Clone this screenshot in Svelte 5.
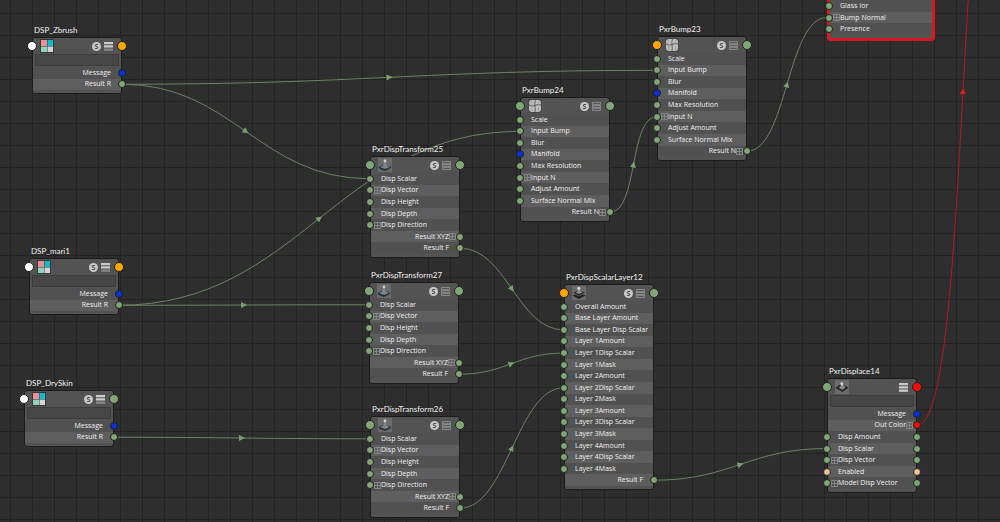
<script>
const disp = ['Disp Scalar', '+Disp Vector', 'Disp Height', 'Disp Depth', '+Disp Direction', '>Result XYZ+', '>Result F'];
const bump = ['Scale', 'Input Bump', 'Blur', 'Manifold*', 'Max Resolution', '+Input N', 'Adjust Amount', 'Surface Normal Mix', '>Result N+'];
const texture = ['>Message*', '>Result R'];
const layer = ['Overall Amount', 'Base Layer Amount', 'Base Layer Disp Scalar',
    'Layer 1Amount', 'Layer 1Disp Scalar', 'Layer 1Mask',
    'Layer 2Amount', 'Layer 2Disp Scalar', 'Layer 2Mask',
    'Layer 3Amount', 'Layer 3Disp Scalar', 'Layer 3Mask',
    'Layer 4Amount', 'Layer 4Disp Scalar', 'Layer 4Mask', '>Result F'];

// leading > = output on the right, + = compound attribute, trailing * = blue port
function plugs(rows) {
    return rows.map((text) => ({
        label: text.replace(/[>+*]/g, ''),
        out: text.startsWith('>'),
        plus: text.includes('+'),
        left: text.startsWith('>') ? '' : text.endsWith('*') ? 'blue' : 'green',
        right: !text.startsWith('>') ? '' : text.endsWith('*') ? 'blue' : 'green',
    }));
}

const displace = plugs(['>Message*', '>Out Color+', 'Disp Amount', 'Disp Scalar', '+Disp Vector', 'Enabled', '+Model Disp Vector']);
displace[1].right = 'red';
for (const p of displace.slice(2)) {
    p.left = p.right = p.label == 'Enabled' ? 'peach' : 'green';
}

const nodes = [
    { id: 'zbrush', title: 'DSP_Zbrush', x: 32, y: 37, icon: 'texture', left: 'white', right: 'orange', list: 'half', search: true, rows: plugs(texture) },
    { id: 'mari', title: 'DSP_mari1', x: 29, y: 258, icon: 'texture', left: 'white', right: 'orange', list: 'half', search: true, rows: plugs(texture) },
    { id: 'dry', title: 'DSP_DrySkin', x: 24, y: 390, icon: 'texture', left: 'white', right: 'green', list: 'half', search: true, rows: plugs(texture) },
    { id: 't25', title: 'PxrDispTransform25', x: 370, y: 156, icon: 'disp', left: 'green', right: 'green', list: 'outline', rows: plugs(disp) },
    { id: 't27', title: 'PxrDispTransform27', x: 369, y: 282, icon: 'disp', left: 'green', right: 'green', list: 'outline', rows: plugs(disp) },
    { id: 't26', title: 'PxrDispTransform26', x: 370, y: 416, icon: 'disp', left: 'green', right: 'green', list: 'outline', rows: plugs(disp) },
    { id: 'b24', title: 'PxrBump24', x: 520, y: 97, icon: 'bump', left: 'green', right: 'green', list: 'outline', rows: plugs(bump) },
    { id: 'b23', title: 'PxrBump23', x: 657, y: 36, icon: 'bump', left: 'orange', right: 'green', list: 'outline', rows: plugs(bump) },
    { id: 'layer', title: 'PxrDispScalarLayer12', x: 564, y: 284, icon: 'layers', left: 'orange', right: 'green', list: 'outline', rows: plugs(layer) },
    { id: 'displace', title: 'PxrDisplace14', x: 827, y: 378, icon: 'plane', left: 'green', right: 'red', list: 'full', search: true, rows: displace },
    { id: 'surface', x: 827, y: -17, wide: true, rows: plugs(['Glass Ior', '+Bump Normal', 'Presence']) },
];

const wires = [
    { from: ['zbrush', 1], to: ['b23', 1] },
    { from: ['zbrush', 1], to: ['t25', 0] },
    { from: ['mari', 1], to: ['b24', 1] },
    { from: ['mari', 1], to: ['t27', 0] },
    { from: ['dry', 1], to: ['t26', 0] },
    { from: ['t25', 6], to: ['layer', 2] },
    { from: ['t27', 6], to: ['layer', 4] },
    { from: ['t26', 6], to: ['layer', 7] },
    { from: ['b24', 8], to: ['b23', 5], bend: 0.6 },
    { from: ['b23', 8], to: ['surface', 1], bend: 0.5 },
    { from: ['layer', 15], to: ['displace', 3] },
    // goes on to a shading group above the visible area
    { from: ['displace', 1], end: [1009, -243], bend: 0.6, red: true },
];

const listHeight = (node) => Math.round(node.rows.length * 185 / 16);

function port([id, row], side) {
    const node = nodes.find((n) => n.id == id);
    const top = node.y + 17 + (node.search ? 13 : 0);
    return [node.x + (side == 'right' ? 90 : 0), top + (row + 0.5) * listHeight(node) / node.rows.length];
}

const curves = wires.map((w) => {
    const [x1, y1] = port(w.from, 'right');
    const [x2, y2] = w.end ?? port(w.to, 'left');
    const d = (x2 - x1) * (w.bend ?? 0.45);
    const angle = Math.atan2(2 * (y2 - y1), 2 * (x2 - x1) - 2 * d) * 180 / Math.PI;
    return {
        d: `M${x1} ${y1} C${x1 + d} ${y1} ${x2 - d} ${y2} ${x2} ${y2}`,
        arrow: `translate(${(x1 + x2) / 2} ${(y1 + y2) / 2}) rotate(${angle})`,
        red: w.red,
    };
});
</script>

<main class="canvas">
    <svg class="wires" aria-hidden="true">
        {#each curves as c}
            <g class:red={c.red}>
                <path class="wire" d={c.d} />
                <path class="arrow" d="M-3 -3 L3 0 L-3 3 Z" transform={c.arrow} />
            </g>
        {/each}
    </svg>

    {#each nodes as node}
        <article class="node" class:wide={node.wide} style="left: {node.x}px; top: {node.y - 13}px">
            <h2>{node.title ?? ''}</h2>
            <div class="body">
                <header>
                    {#if node.icon}
                        <span class="port big left {node.left}"></span>
                        <svg class="icon" viewBox="0 0 14 14">
                            {#if node.icon == 'texture'}
                                <rect width="14" height="14" fill="#33393b" />
                                <rect x="1" y="1" width="6" height="6" fill="#f08c98" />
                                <rect x="7.5" y="1" width="5.5" height="6" fill="#10bccb" />
                                <rect x="1" y="7.5" width="6" height="5.5" fill="#92d3bd" />
                                <rect x="7.5" y="7.5" width="5.5" height="5.5" fill="#d5d5d5" />
                            {:else if node.icon == 'bump'}
                                <rect width="14" height="14" fill="#484848" />
                                <rect x="1" y="1" width="12" height="12" rx="3" fill="#bdbdbd" />
                                <path d="M7.5 1 Q6.5 4 7 7 T7 13 M1 6 Q4 8 7 6.5 T13 6" fill="none" stroke="#4a4a4a" stroke-width=".8" />
                                <path d="M4 1.5 Q2.5 4 3 6 M11 2 Q10 4 11 6 M3.5 8 Q3 10 4.5 12.5 M10.5 8 Q11 10 10 12.5" fill="none" stroke="#959595" stroke-width=".7" />
                            {:else}
                                <rect width="14" height="14" fill="#6b6b6b" />
                                {#if node.icon == 'disp'}
                                    <path d="M0.5 9 L6.5 6.5 L13.5 9 L12 10.5 L7 13 L1.5 11 Z" fill="#27313a" />
                                    <path d="M2 9 Q6 8.3 6.3 4 H7.7 Q8 8.3 12 9 L7 11 Z" fill="#7b878d" />
                                    <circle cx="7" cy="3" r="1.4" fill="#d0d0d0" />
                                {:else if node.icon == 'layers'}
                                    <path d="M0.5 9.5 L7 7 L13.5 9.5 L7 13 Z" fill="#222" />
                                    <path d="M0.5 6.5 L7 4 L13.5 6.5 L7 10 Z" fill="#262626" stroke="#777" stroke-width=".6" />
                                    <path d="M3.5 6.5 Q6.3 5.5 6.3 2.5 H7.7 Q8 5.5 10.5 6.5 L7 8 Z" fill="#8d8d8d" />
                                    <circle cx="6.8" cy="2.3" r="1.5" fill="#ddd" />
                                {:else}
                                    <path d="M0.5 8 L6 4 L13.5 7.5 L7.5 12 Z" fill="#252525" />
                                    <path d="M3.8 8 L6 5.5 Q7 3 8.5 5.2 L10.5 7.5 L7.5 9.8 Z" fill="#8d8d8d" />
                                    <circle cx="6.8" cy="3.8" r="1.6" fill="#d0d0d0" />
                                {/if}
                            {/if}
                        </svg>
                        <span class="fill"></span>
                        {#if node.list != 'full'}
                            <button class="solo" aria-label="Solo {node.title}">S</button>
                        {/if}
                        <button class="list" aria-label="Attributes of {node.title}">
                            <svg viewBox="0 0 10 10">
                                {#if node.list == 'outline'}
                                    <path d="M.5 .5 H9.5 V3 H.5 Z M.5 4 H9.5 V6 H.5 Z M.5 7 H9.5 V9.5 H.5 Z" fill="#555" stroke="#a0a0a0" stroke-width=".8" />
                                {:else}
                                    <path d="M0 0 H10 V2.6 H0 Z M0 3.6 H10 V6.2 H0 Z" fill="#cbcbcb" />
                                    <path d="M0 7.2 H10 V9.8 H0 Z" fill={node.list == 'full' ? '#cbcbcb' : '#858585'} />
                                {/if}
                            </svg>
                        </button>
                        <span class="port big right {node.right}"></span>
                    {/if}
                </header>
                {#if node.search}
                    <input type="text" aria-label="Filter {node.title}" />
                {/if}
                <ul style="height: {listHeight(node)}px">
                    {#each node.rows as row}
                        <li class:out={row.out}>
                            {#if row.left}<span class="port left {row.left}"></span>{/if}
                            <span class="plus">
                                {#if row.plus}
                                    <svg viewBox="0 0 7 7"><path d="M.5 .5 H6.5 V6.5 H.5 Z M3.5 .5 V6.5 M.5 3.5 H6.5" /></svg>
                                {/if}
                            </span>
                            <span>{row.label}</span>
                            {#if row.right}<span class="port right {row.right}"></span>{/if}
                        </li>
                    {/each}
                </ul>
            </div>
        </article>
    {/each}
</main>

<style>
    :global(body) {
        background: #2e2e2e;
    }
    .canvas {
        position: relative;
        min-height: 100vh;
        overflow: hidden;
        background-color: #2e2e2e;
        background-image:
            linear-gradient(to right, #232323 1px, transparent 1px),
            linear-gradient(to bottom, #232323 1px, transparent 1px);
        background-size: 22px 22px;
        background-position: 10px 13px;
        font-family: "Open Sans", "Noto Sans", sans-serif;
        font-size: 7px;
        color: #f0f0f0;
    }
    .wires {
        position: absolute;
        width: 100%;
        height: 100%;
    }
    .wire {
        fill: none;
        stroke: #6b8264;
        stroke-width: 1;
    }
    .arrow {
        fill: #79a06e;
    }
    .red .wire {
        stroke: #b01c1e;
    }
    .red .arrow {
        fill: #e01818;
    }
    .node {
        position: absolute;
        width: 90px;
    }
    h2 {
        margin: 0 0 1px 2px;
        height: 12px;
        font-family: Lato, "Open Sans", sans-serif;
        font-size: 8px;
        font-weight: 400;
        line-height: 12px;
        white-space: nowrap;
    }
    .body {
        border: 1px solid #1c1c1c;
        border-radius: 3px;
        padding-bottom: 3px;
        background: #535353;
    }
    header {
        position: relative;
        display: flex;
        align-items: center;
        gap: 3px;
        height: 16px;
        padding: 0 8px 0 7px;
    }
    .fill {
        flex: 1;
    }
    .icon {
        width: 14px;
        height: 14px;
    }
    button {
        padding: 0;
        border: none;
        background: none;
    }
    .solo {
        width: 9px;
        height: 9px;
        border-radius: 50%;
        background: #c8c8c8;
        color: #4a4a4a;
        font-family: inherit;
        font-size: 7px;
        font-weight: 700;
        line-height: 9px;
    }
    .list {
        width: 9px;
        height: 9px;
    }
    .list svg {
        display: block;
    }
    input {
        display: block;
        box-sizing: border-box;
        width: calc(100% - 4px);
        height: 12px;
        margin: 0 2px 1px;
        padding: 0 2px;
        border: 1px solid #3c3c3c;
        background: #474747;
        color: inherit;
        font: inherit;
    }
    ul {
        display: flex;
        flex-direction: column;
        margin: 0;
        padding: 0;
        list-style: none;
    }
    li {
        position: relative;
        display: flex;
        flex: 1;
        align-items: center;
        min-height: 0;
        padding: 0 3px;
        line-height: 10px;
        white-space: nowrap;
        background: #515151;
    }
    li:nth-child(even) {
        background: #5e5e5e;
    }
    .out {
        flex-direction: row-reverse;
    }
    .plus {
        width: 7px;
        height: 7px;
    }
    .plus svg {
        display: block;
        fill: none;
        stroke: #868686;
        stroke-width: 1;
    }
    .port {
        position: absolute;
        top: calc(50% - 4px);
        box-sizing: border-box;
        width: 8px;
        height: 8px;
        border: 1px solid #1d231b;
        border-radius: 50%;
        background: #82a677;
    }
    .port.left {
        left: -5px;
    }
    .port.right {
        right: -5px;
    }
    .port.big {
        top: 3px;
        width: 10px;
        height: 10px;
    }
    .big.left {
        left: -6px;
    }
    .big.right {
        right: -6px;
    }
    .port.white {
        background: #fff;
    }
    .port.orange {
        background: #ffa60a;
    }
    .port.blue {
        background: #0b2fd0;
    }
    .port.red {
        background: #f60b0b;
    }
    .port.peach {
        background: #e8c39a;
    }
    .wide {
        width: 108px;
    }
    .wide .body {
        border: 3px solid #d41a20;
        border-top: none;
        border-radius: 4px;
    }
    .wide header {
        padding-top: 1px;
    }
    .wide .port.left {
        left: -5px;
    }
</style>
